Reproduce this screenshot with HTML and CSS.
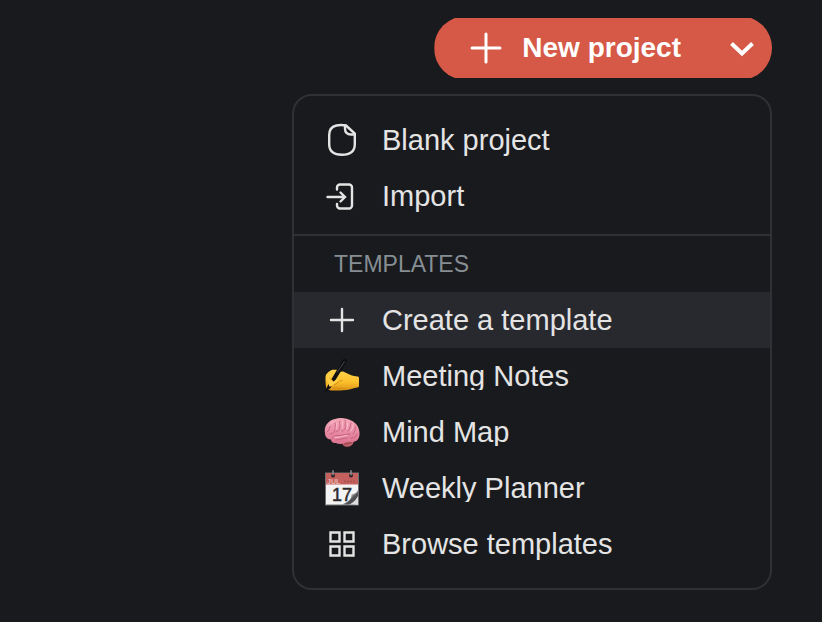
FILE: index.html
```
<!DOCTYPE html>
<html lang="en">

<head>
    <meta charset="UTF-8">
    <meta name="viewport" content="width=device-width, initial-scale=1.0">
    <title>Projects</title>
    <link rel="stylesheet" href="styles.css">
</head>

<body>
    <div class="toolbar">
        <div class="split-button">
            <button type="button" class="new-project">
                <svg width="32" height="32" viewBox="0 0 32 32" aria-hidden="true">
                    <path d="M16 2v28M2 16h28" fill="none" stroke="currentColor" stroke-width="3" stroke-linecap="round" />
                </svg>
                New project
            </button>
            <button type="button" class="toggle" aria-label="More options" aria-haspopup="menu" aria-expanded="true">
                <svg width="26" height="20" viewBox="0 0 26 20" aria-hidden="true">
                    <path d="M2.500 5.500L13 15.500L23.500 5.500" fill="none" stroke="currentColor" stroke-width="4" />
                </svg>
            </button>
        </div>

        <div class="menu" role="menu">
            <div class="menu-group">
                <button type="button" class="item" role="menuitem">
                    <svg class="icon" viewBox="0 0 36 36" aria-hidden="true">
                        <path d="M22 3.500C19 3 15 3 12.500 3.500 7.500 4.500 5.300 7.500 5.200 13v9.500C5.300 29 9.500 32.700 18 32.700S30.700 29 30.800 22.500V11.500z" />
                        <path d="M21 3.500V6.500c0 4 2 6 6 6H30.500" />
                    </svg>
                    <span>Blank project</span>
                </button>
                <button type="button" class="item" role="menuitem">
                    <svg class="icon" viewBox="0 0 36 36" aria-hidden="true">
                        <path d="M13 11.500V9.500a3 3 0 0 1 3-3h9a3 3 0 0 1 3 3v18a3 3 0 0 1-3 3H16a3 3 0 0 1-3-3v-1.500" />
                        <path d="M3.500 19H20.500M16.500 14.500L21 19l-4.500 4.500" />
                    </svg>
                    <span>Import</span>
                </button>
            </div>

            <div class="menu-group templates">
                <h2>TEMPLATES</h2>
                <button type="button" class="item active" role="menuitem">
                    <svg class="icon" viewBox="0 0 36 36" aria-hidden="true">
                        <path d="M18 7v22M7 18h22" />
                    </svg>
                    <span>Create a template</span>
                </button>
                <button type="button" class="item" role="menuitem">
                    <svg class="emoji" viewBox="0 0 36 36" aria-hidden="true">
                        <defs>
                            <linearGradient id="skin" x1="0" y1="0" x2="0" y2="1">
                                <stop offset="0" stop-color="#ffd54c" />
                                <stop offset="0.6" stop-color="#fcbf2c" />
                                <stop offset="1" stop-color="#dc9214" />
                            </linearGradient>
                        </defs>
                        <path d="M1.500 19c0-3 3.500-6 7-7.300h6.500c1.500 0 2 1 1 2l3-.3c4 1.600 7 3.600 11 4.600l3.500.5c1.200 0 1.500.8 1.500 2v7c0 1.200-.5 1.800-1.500 2-4 .5-7 2-11 2.500-4 .7-8 .3-12 .5-4 .3-8-.5-8.500-3.500-.3-3-.6-7-.5-10z" fill="url(#skin)" />
                        <path d="M0.500 35l2.500-6L18 3c1.200-2 2.500-2.800 4-2s1.500 2 .3 3.500L6.500 30z" fill="#101012" />
                        <path d="M20.500 3.500L13 14.500" fill="none" stroke="#4a4a4e" stroke-width="1" />
                        <path d="M3 19c1-3 4-5 7-6.300 1.500 0 1 1.500 0 2.600L6 20l3.500 3.500c2.500-1.500 4-2.500 6-2L10 26.500c-2.500 2-5 3-5 1z" fill="#ffcf45" />
                        <path d="M6 20.500l3.500 3M10 27c3-1 4-4 8-4.500M9 30.500l4-1M14 31l4-1M19 31l3-.5" fill="none" stroke="#cf8812" stroke-width="0.900" stroke-linecap="round" />
                    </svg>
                    <span class="name">Meeting Notes</span>
                </button>
                <button type="button" class="item" role="menuitem">
                    <svg class="emoji" viewBox="0 0 36 36" aria-hidden="true">
                        <defs>
                            <linearGradient id="brain" x1="0" y1="0" x2="0" y2="1">
                                <stop offset="0" stop-color="#f5a9ba" />
                                <stop offset="1" stop-color="#dc7391" />
                            </linearGradient>
                        </defs>
                        <path d="M18 28c2-3 8-4 12-2 0 4-3 6.800-7 6.800-3 0-5-2-5-4.800z" fill="#bd6068" />
                        <path d="M20 30c3 0 6-1 8-2" fill="none" stroke="#8d3c48" stroke-width="0.900" />
                        <path d="M1 19C-.5 12 5 6 11 5c5-2 12-1 16 1.500C32 8.500 36 14 35.500 20c0 4-2 7-5 7.500-3 1.500-6-.5-9 1-3 1.800-7 2-9.500.5C9 29.500 7 28 7 25.500 3.500 25.500 1 23 1 19z" fill="url(#brain)" />
                        <path d="M8 25c0-3 4-4 7-3.500 4 .5 7-2 11-1.500M3 18c2-1 3-4 3-7M6 20c3 0 5-2 5-5 0-2 1-4 0-6M12 18c3-1 4-3 4-6 0-2-1-3 0-5M18 17c3 0 4-3 3-6 0-2 1-3 0-5M24 17c2-2 2-5 3-8M29 20c2-2 3-5 2-8M27 24c3 0 5-1 6-4M12 26c4 0 7-2 11-2" fill="none" stroke="#c45f7e" stroke-width="0.900" stroke-linecap="round" />
                        <path d="M5 12c2-3 3-4 5-4.500M13 9c0 3-1 4-1 6M18.500 8c.5 3 0 4-.5 6M24 9c0 2-1 4-1 6M29 11c0 3-1 4-2 6M11 23.500c4 0 7-1 12-2" fill="none" stroke="#fbc0cc" stroke-width="1" stroke-linecap="round" />
                    </svg>
                    <span class="name">Mind Map</span>
                </button>
                <button type="button" class="item" role="menuitem">
                    <svg class="emoji" viewBox="0 0 36 36" aria-hidden="true">
                        <defs>
                            <linearGradient id="curl" x1="0" y1="0" x2="1" y2="1">
                                <stop offset="0.300" stop-color="#f3f3f3" />
                                <stop offset="0.500" stop-color="#9a9a9a" />
                                <stop offset="0.620" stop-color="#505052" />
                            </linearGradient>
                        </defs>
                        <path d="M1 2.500h34v33H1z" fill="#6f6f71" />
                        <path d="M2 14h32v20.500H2z" fill="#f3f3f3" />
                        <path d="M2 3h32v11.500H2z" fill="#c4605d" />
                        <text class="month" x="3" y="14">JUL</text>
                        <path d="M20 11.500h12" stroke="#a9524f" stroke-width="2" stroke-dasharray="2 1" />
                        <path d="M34 20c-1 3-4 4-6.500 4.500C28 29 24 32 18 34.500h12c2-1 4-4 4-6z" fill="url(#curl)" />
                        <path d="M34 26v8.500h-9c5-2 7-5 9-8.500z" fill="#dedede" />
                        <text class="day" x="8" y="31">17</text>
                        <circle cx="9" cy="5.500" r="2" fill="#292326" />
                        <circle cx="27" cy="5.500" r="2" fill="#292326" />
                        <path d="M9 .8v4M27 .8v4" stroke="#8f9194" stroke-width="1.500" stroke-linecap="round" />
                    </svg>
                    <span class="name">Weekly Planner</span>
                </button>
                <button type="button" class="item" role="menuitem">
                    <svg class="icon" viewBox="0 0 36 36" aria-hidden="true">
                        <path d="M6.500 6.500h9v9h-9zM20.500 6.500h9v9h-9zM6.500 20.500h9v9h-9zM20.500 20.500h9v9h-9z" />
                    </svg>
                    <span>Browse templates</span>
                </button>
            </div>
        </div>
    </div>
</body>

</html>
```

FILE: styles.css
```
* {
    margin: 0;
    padding: 0;
    box-sizing: border-box;
}

body {
    font-family: "Liberation Sans", Arial, sans-serif;
    background-color: #191a1d;
    color: #e4e4e4;
}

button {
    border: none;
    background: none;
    color: inherit;
    font-family: inherit;
    cursor: pointer;
}

.toolbar {
    display: flex;
    flex-direction: column;
    align-items: flex-end;
    gap: 14px;
    padding: 16px 50px 32px;
}

/* pill with slightly flattened top and bottom */
.split-button {
    display: flex;
    height: 64px;
    border-radius: 32px;
    background-color: #d65947;
    color: #ffffff;
    clip-path: inset(2px 0);
}

.new-project {
    display: flex;
    align-items: center;
    gap: 20px;
    padding: 0 30px 0 36px;
    font-size: 28px;
    font-weight: bold;
}

.toggle {
    display: flex;
    align-items: center;
    justify-content: center;
    width: 61px;
}

.menu {
    width: 100%;
    max-width: 480px;
    border: 2px solid #303134;
    border-radius: 20px;
    overflow: hidden;
}

.menu-group {
    padding: 16px 0 10px;
}

.templates {
    padding: 0 0 16px;
    border-top: 2px solid #303134;
}

h2 {
    padding-left: 40px;
    font-size: 23px;
    font-weight: normal;
    line-height: 56px;
    color: #868e94;
}

.item {
    display: flex;
    align-items: center;
    gap: 22px;
    width: 100%;
    height: 56px;
    padding: 0 30px;
    font-size: 29px;
    text-align: left;
}

.item:hover,
.item.active {
    background-color: #28292e;
}

.name {
    line-height: 28px;
    overflow: hidden;
}

.icon,
.emoji {
    flex: none;
    width: 36px;
    height: 36px;
}

.icon {
    fill: none;
    stroke: currentColor;
    stroke-width: 2.4;
    stroke-linecap: round;
}

.month {
    font-size: 7px;
    font-weight: bold;
    fill: #e8b5b3;
}

.day {
    font-size: 18px;
    fill: #2b2b2d;
    stroke: #2b2b2d;
    stroke-width: 0.5;
}
```
